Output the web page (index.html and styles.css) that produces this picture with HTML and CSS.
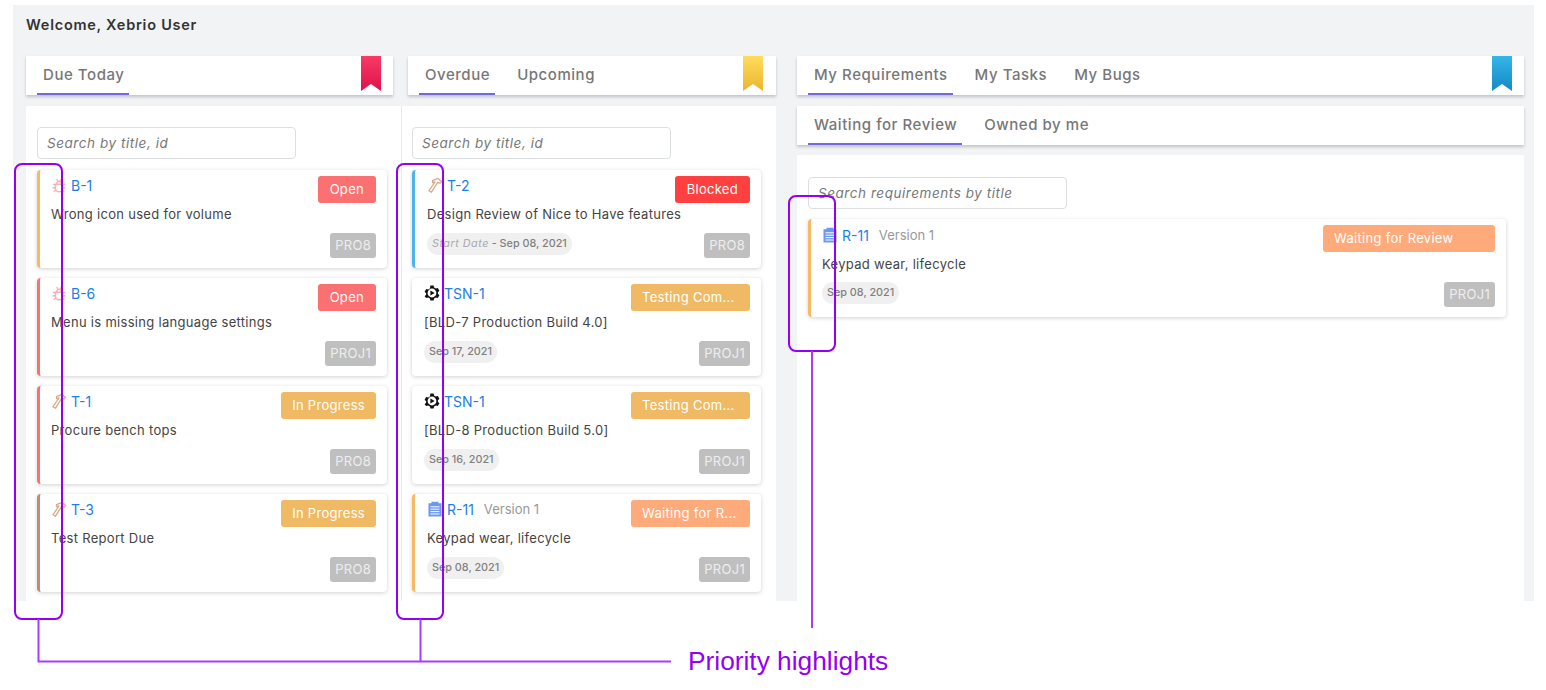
FILE: index.html
```html
<!DOCTYPE html>
<html lang="en">
<head>
  <meta charset="UTF-8" />
  <meta name="viewport" content="width=device-width, initial-scale=1" />
  <title>Xebrio Dashboard</title>
  <link rel="stylesheet" href="styles.css">
</head>
<body>
  <svg class="defs" width="0" height="0" aria-hidden="true">
    <defs>
      <linearGradient id="ribbonRed" x1="0" y1="0" x2="0" y2="1"><stop offset="0" stop-color="#f83a66"/><stop offset="1" stop-color="#e0124a"/></linearGradient>
      <linearGradient id="ribbonYellow" x1="0" y1="0" x2="0" y2="1"><stop offset="0" stop-color="#ffdc5c"/><stop offset="1" stop-color="#eab52f"/></linearGradient>
      <linearGradient id="ribbonBlue" x1="0" y1="0" x2="0" y2="1"><stop offset="0" stop-color="#35b6e6"/><stop offset="1" stop-color="#1488c8"/></linearGradient>
      <symbol id="icoBug" viewBox="0 0 16 16">
        <path d="M4.400 7.200h7.200v3.800a3.600 3.800 0 0 1-7.200 0z M5.400 7a2.600 2.600 0 0 1 5.200 0 M5.600 2l1.400 2.400 M10.400 2L9 4.400 M4.400 8.400L1.800 7 M11.600 8.400L14.200 7 M4.400 10.800H1.600 M11.600 10.800h2.800 M5 13l-2.400 1.800 M11 13l2.400 1.800" fill="none" stroke="#fbb0b0" stroke-width="1.400"/>
      </symbol>
      <symbol id="icoHammer" viewBox="0 0 16 16">
        <path d="M5.500 3.600L11 1.400l3.600 3.200-1.500 1.500-2.600-.6L4.500 15.200 2 13.700l6-8.700-2.500.6z" fill="none" stroke="#d8a888" stroke-width="1.300" stroke-linejoin="round"/>
      </symbol>
      <symbol id="icoGear" viewBox="0 0 16 16">
        <path fill-rule="evenodd" d="M6.400.6h3.200l.5 2 1.700 1 2-.6 1.600 2.800-1.500 1.400v1.600l1.500 1.400-1.600 2.800-2-.6-1.700 1-.5 2H6.400l-.5-2-1.700-1-2 .6L.6 11.200l1.500-1.400V8.200L.6 6.800l1.600-2.800 2 .6 1.700-1zM8 3.600a4.400 4.400 0 1 0 0 8.800 4.400 4.400 0 0 0 0-8.800z" fill="#111"/>
        <path d="M6.400 5.400l4.200 2.600-4.200 2.600z" fill="#111"/>
      </symbol>
      <symbol id="icoReq" viewBox="0 0 16 16">
        <path d="M1.500 2.200h3V.8h7v1.400h3V15.500h-13z" fill="#6c98f2"/>
        <path d="M3.500 5.800h9M3.500 8.200h9M3.500 10.600h9M3.500 13h9" stroke="#fff" stroke-width="1"/>
      </symbol>
    </defs>
  </svg>

  <div class="page">
    <main class="panel">
      <h1 class="welcome">Welcome, Xebrio User</h1>

      <div class="boards">
        <div class="group">
          <section class="board board-first">
            <div class="tabbar">
              <a class="tab active">Due Today</a>
              <svg class="ribbon" viewBox="0 0 20 35"><path d="M0 0h20v35l-10-7-10 7z" fill="url(#ribbonRed)"/></svg>
            </div>
            <div class="board-body">
              <input class="search" type="text" placeholder="Search by title, id" />
              <div class="cards">
                <article class="card p-yellow">
                  <div class="card-top">
                    <div class="card-id"><svg class="ico"><use href="#icoBug"/></svg><a>B-1</a></div>
                    <span class="status open">Open</span>
                  </div>
                  <p class="card-title">Wrong icon used for volume</p>
                  <div class="card-foot"><span class="project">PRO8</span></div>
                </article>
                <article class="card p-red">
                  <div class="card-top">
                    <div class="card-id"><svg class="ico"><use href="#icoBug"/></svg><a>B-6</a></div>
                    <span class="status open">Open</span>
                  </div>
                  <p class="card-title">Menu is missing language settings</p>
                  <div class="card-foot"><span class="project">PROJ1</span></div>
                </article>
                <article class="card p-red">
                  <div class="card-top">
                    <div class="card-id"><svg class="ico"><use href="#icoHammer"/></svg><a>T-1</a></div>
                    <span class="status progress">In Progress</span>
                  </div>
                  <p class="card-title">Procure bench tops</p>
                  <div class="card-foot"><span class="project">PRO8</span></div>
                </article>
                <article class="card p-brown">
                  <div class="card-top">
                    <div class="card-id"><svg class="ico"><use href="#icoHammer"/></svg><a>T-3</a></div>
                    <span class="status progress">In Progress</span>
                  </div>
                  <p class="card-title">Test Report Due</p>
                  <div class="card-foot"><span class="project">PRO8</span></div>
                </article>
              </div>
            </div>
          </section>

          <section class="board board-second">
            <div class="tabbar">
              <a class="tab active">Overdue</a>
              <a class="tab">Upcoming</a>
              <svg class="ribbon" viewBox="0 0 20 35"><path d="M0 0h20v35l-10-7-10 7z" fill="url(#ribbonYellow)"/></svg>
            </div>
            <div class="board-body">
              <input class="search" type="text" placeholder="Search by title, id" />
              <div class="cards">
                <article class="card p-blue">
                  <div class="card-top">
                    <div class="card-id"><svg class="ico"><use href="#icoHammer"/></svg><a>T-2</a></div>
                    <span class="status blocked">Blocked</span>
                  </div>
                  <p class="card-title">Design Review of Nice to Have features</p>
                  <div class="card-foot">
                    <span class="date"><em>Start Date</em> - Sep 08, 2021</span>
                    <span class="project">PRO8</span>
                  </div>
                </article>
                <article class="card">
                  <div class="card-top">
                    <div class="card-id"><svg class="ico"><use href="#icoGear"/></svg><a>TSN-1</a></div>
                    <span class="status progress clipped">Testing Com...</span>
                  </div>
                  <p class="card-title">[BLD-7 Production Build 4.0]</p>
                  <div class="card-foot">
                    <span class="date">Sep 17, 2021</span>
                    <span class="project">PROJ1</span>
                  </div>
                </article>
                <article class="card">
                  <div class="card-top">
                    <div class="card-id"><svg class="ico"><use href="#icoGear"/></svg><a>TSN-1</a></div>
                    <span class="status progress clipped">Testing Com...</span>
                  </div>
                  <p class="card-title">[BLD-8 Production Build 5.0]</p>
                  <div class="card-foot">
                    <span class="date">Sep 16, 2021</span>
                    <span class="project">PROJ1</span>
                  </div>
                </article>
                <article class="card p-yellow">
                  <div class="card-top">
                    <div class="card-id"><svg class="ico"><use href="#icoReq"/></svg><a>R-11</a><span class="version">Version 1</span></div>
                    <span class="status review clipped">Waiting for R...</span>
                  </div>
                  <p class="card-title">Keypad wear, lifecycle</p>
                  <div class="card-foot">
                    <span class="date">Sep 08, 2021</span>
                    <span class="project">PROJ1</span>
                  </div>
                </article>
              </div>
            </div>
          </section>
        </div>

        <section class="board board-right">
          <div class="tabbar">
            <a class="tab active">My Requirements</a>
            <a class="tab">My Tasks</a>
            <a class="tab">My Bugs</a>
            <svg class="ribbon" viewBox="0 0 20 35"><path d="M0 0h20v35l-10-7-10 7z" fill="url(#ribbonBlue)"/></svg>
          </div>
          <div class="tabbar subtabs">
            <a class="tab active">Waiting for Review</a>
            <a class="tab">Owned by me</a>
          </div>
          <div class="board-body">
            <input class="search" type="text" placeholder="Search requirements by title" />
            <div class="cards">
              <article class="card p-yellow">
                <div class="card-top">
                  <div class="card-id"><svg class="ico"><use href="#icoReq"/></svg><a>R-11</a><span class="version">Version 1</span></div>
                  <span class="status review wide">Waiting for Review</span>
                </div>
                <p class="card-title">Keypad wear, lifecycle</p>
                <div class="card-foot">
                  <span class="date">Sep 08, 2021</span>
                  <span class="project">PROJ1</span>
                </div>
              </article>
            </div>
          </div>
        </section>
      </div>
    </main>

    <!-- annotation drawn over the screenshot -->
    <svg class="callout" width="1546" height="690" viewBox="0 0 1546 690" aria-hidden="true">
      <g fill="none" stroke="#9500f5" stroke-width="2">
        <rect x="15" y="164" width="47" height="455" rx="7"/>
        <rect x="397" y="164" width="46" height="455" rx="7"/>
        <rect x="789" y="196" width="46" height="155" rx="7"/>
      </g>
      <path d="M38.500 619V661.500H671M420.500 619V661.500M812 351V628" fill="none" stroke="#a93cf5" stroke-width="2"/>
    </svg>
    <div class="callout-label">Priority highlights</div>
  </div>
</body>
</html>
```

FILE: styles.css
```css
* {
  box-sizing: border-box;
}

body {
  margin: 0;
  background: #fff;
  color: #444;
  font-family: Inter, "Open Sans", sans-serif;
}

.defs {
  position: absolute;
}

.page {
  position: relative;
  width: 1546px;
  height: 690px;
  padding: 5px 12px 0 13px;
  overflow: hidden;
}

.panel {
  height: 596px;
  padding: 0 10px 0 13px;
  background: #f1f3f5;
}

.welcome {
  height: 51px;
  margin: 0;
  padding-top: 11px;
  font-size: 14.500px;
  line-height: 18px;
  font-weight: 600;
  letter-spacing: 0.75px;
  color: #333;
}

.boards {
  display: flex;
  gap: 21px;
  height: 545px;
}

.group {
  display: flex;
  width: 750px;
}

.board {
  display: flex;
  flex-direction: column;
  width: 375px;
}

.board-right {
  width: 727px;
}

.tabbar {
  display: flex;
  flex: none;
  gap: 16px;
  height: 39px;
  padding: 0 12px 0 11px;
  background: #fff;
  box-shadow: 0 2px 3px rgba(0, 0, 0, 0.2);
}

.board-first .tabbar {
  margin-right: 8px;
}

.board-second .tabbar {
  margin-left: 7px;
  padding-right: 13px;
}

.subtabs {
  margin-top: 11px;
}

.tab {
  height: 39px;
  padding: 0 5px 0 6px;
  font-size: 15px;
  font-weight: 500;
  line-height: 37px;
  letter-spacing: 0.55px;
  color: #777;
  white-space: nowrap;
}

.tab.active {
  border-bottom: 2px solid #7567e0;
}

.ribbon {
  width: 20px;
  height: 35px;
  margin-left: auto;
}

.board-body {
  flex: 1;
  margin-top: 11px;
  padding: 21px 14px 0 11px;
  background: #fff;
}

.board-second .board-body {
  padding: 21px 15px 0 10px;
  border-left: 1px solid #e6e8ea;
}

.subtabs + .board-body {
  margin-top: 10px;
  padding: 22px 18px 0 11px;
}

.search {
  display: block;
  width: 259px;
  height: 32px;
  padding: 0 9px;
  border: 1px solid #dcdfe2;
  border-radius: 4px;
  outline: none;
  font-family: inherit;
  font-size: 13.500px;
  font-style: italic;
  letter-spacing: 0.55px;
}

.search::placeholder {
  color: #777;
}

.cards {
  display: flex;
  flex-direction: column;
  gap: 10px;
  margin-top: 11px;
}

.subtabs + .board-body .cards {
  margin-top: 10px;
}

.card {
  display: flex;
  flex-direction: column;
  height: 98px;
  padding: 6px 11px 10px 11px;
  border-radius: 4px;
  background: #fff;
  box-shadow: 0 1px 4px rgba(0, 0, 0, 0.18);
}

.board-second .card {
  padding-left: 12px;
}

.p-yellow, .p-red, .p-brown, .p-blue {
  border-left: 3px solid;
}

.p-yellow { border-left-color: #f6bb62; }
.p-red { border-left-color: #f87272; }
.p-brown { border-left-color: #c48a6c; }
.p-blue { border-left-color: #4fb3ec; }

.card-top {
  display: flex;
  align-items: flex-start;
  justify-content: space-between;
}

.card-id {
  display: flex;
  align-items: center;
  gap: 4px;
  height: 20px;
  margin-top: -1px;
  font-size: 14px;
  color: #1c7fe6;
}

.board-right .card-id {
  margin-top: 0;
}

.ico {
  width: 16px;
  height: 16px;
}

.version {
  margin-left: 6px;
  font-size: 13px;
  color: #999;
}

.status {
  height: 27px;
  padding: 0 11px;
  border-radius: 3px;
  font-size: 13px;
  line-height: 27px;
  letter-spacing: 0.3px;
  color: #fff;
  white-space: nowrap;
}

.open { background: #fb7070; padding: 0 12px; }
.blocked { background: #ff4040; padding: 0 12px; }
.progress { background: #efba63; }
.review { background: #ffaa7a; }

.clipped {
  width: 119px;
  overflow: hidden;
}

.wide {
  width: 172px;
}

.card-title {
  margin: 1px 0 0;
  font-size: 13px;
  line-height: 20px;
  letter-spacing: 0.3px;
  color: #444;
}

.board-right .card-title {
  margin-top: 2px;
}

.card-foot {
  display: flex;
  align-items: flex-start;
  justify-content: space-between;
  margin-top: auto;
}

.project {
  height: 25px;
  margin-left: auto;
  padding: 0 5px;
  border-radius: 3px;
  background: #bfbfbf;
  font-size: 13px;
  line-height: 25px;
  letter-spacing: 0.3px;
  color: #eee;
}

.date {
  height: 22px;
  padding: 0 5px;
  border-radius: 11px;
  background: #f0f0f0;
  font-size: 10.800px;
  font-weight: 500;
  line-height: 22px;
  color: #808080;
}

.date em {
  font-weight: 400;
  letter-spacing: 0.5px;
  color: #aaa;
}

.callout {
  position: absolute;
  top: 0;
  left: 0;
  pointer-events: none;
}

.callout-label {
  position: absolute;
  top: 646px;
  left: 688px;
  font-family: "Liberation Sans", Arial, sans-serif;
  font-size: 26.300px;
  line-height: 30px;
  color: #9500f5;
}
```
